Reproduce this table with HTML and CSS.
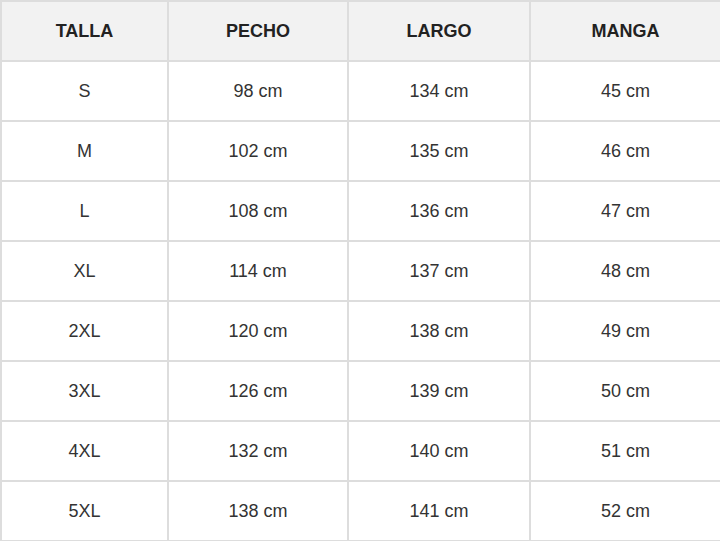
FILE: index.html
```html
<!DOCTYPE html>
<html lang="es">
<head>
<meta charset="utf-8">
<title>Tabla de tallas</title>
<link rel="stylesheet" href="styles.css">
</head>
<body>
<table class="sizes">
  <colgroup>
    <col class="c1"><col class="c2"><col class="c3"><col class="c4">
  </colgroup>
  <thead>
    <tr><th>TALLA</th><th>PECHO</th><th>LARGO</th><th>MANGA</th></tr>
  </thead>
  <tbody>
    <tr><td>S</td><td>98 cm</td><td>134 cm</td><td>45 cm</td></tr>
    <tr><td>M</td><td>102 cm</td><td>135 cm</td><td>46 cm</td></tr>
    <tr><td>L</td><td>108 cm</td><td>136 cm</td><td>47 cm</td></tr>
    <tr><td>XL</td><td>114 cm</td><td>137 cm</td><td>48 cm</td></tr>
    <tr><td>2XL</td><td>120 cm</td><td>138 cm</td><td>49 cm</td></tr>
    <tr><td>3XL</td><td>126 cm</td><td>139 cm</td><td>50 cm</td></tr>
    <tr><td>4XL</td><td>132 cm</td><td>140 cm</td><td>51 cm</td></tr>
    <tr><td>5XL</td><td>138 cm</td><td>141 cm</td><td>52 cm</td></tr>
  </tbody>
</table>
</body>
</html>
```
FILE: styles.css
```css
html, body {
  margin: 0;
  padding: 0;
  background: #ffffff;
}
.sizes {
  width: 720px;
  border-collapse: collapse;
  table-layout: fixed;
  font-family: "Liberation Sans", Arial, sans-serif;
  font-size: 18px;
  color: #333333;
}
.c1 { width: 167px; }
.c2 { width: 180px; }
.c3 { width: 182px; }
.c4 { width: 191px; }
.sizes th,
.sizes td {
  border: 2px solid #dddddd;
  text-align: center;
  vertical-align: middle;
  padding: 0;
  height: 58px;
}
.sizes th {
  background: #f2f2f2;
  color: #222222;
  font-weight: bold;
  height: 58px;
}
```
